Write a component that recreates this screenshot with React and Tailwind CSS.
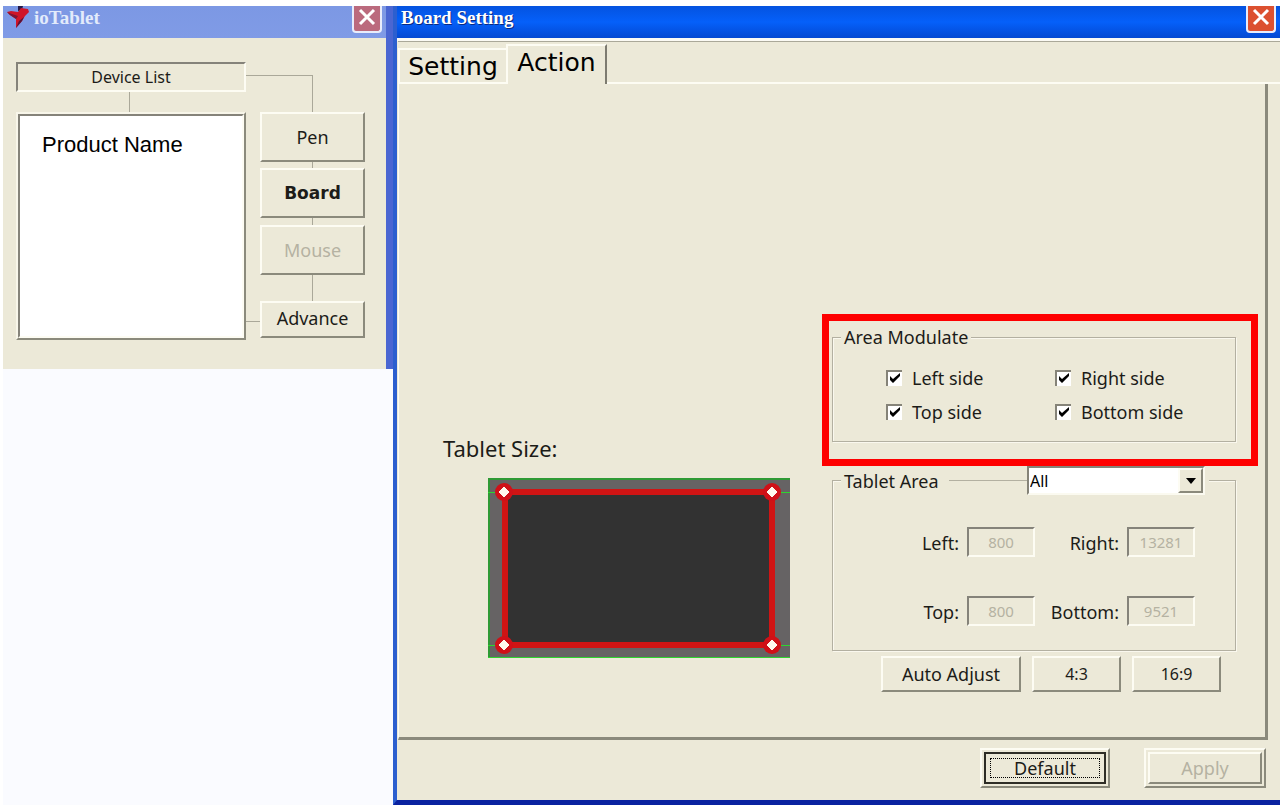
import React, { useState } from 'react';

const raised = 'border-2 border-t-[#fdfcf3] border-l-[#fdfcf3] border-b-[#8b8a7c] border-r-[#8b8a7c] bg-[#ece9d8]';
const sunken = 'border-2 border-t-[#85837a] border-l-[#85837a] border-b-[#fdfcf3] border-r-[#fdfcf3]';
const etched = 'border border-[#b3b0a1] shadow-[inset_1px_1px_#faf8ee,1px_1px_#faf8ee]';

function CloseButton({ className }) {
  return (
    <button
      aria-label="Close"
      className={`flex h-[27px] w-[30px] items-center justify-center rounded-b-[4px] border-2 border-t-0 border-[#e8ecfb] pb-1 ${className}`}
    >
      <svg width="18" height="18" viewBox="0 0 18 18">
        <path d="M2 2 L16 16 M16 2 L2 16" stroke="#fff" strokeWidth="3" fill="none" />
      </svg>
    </button>
  );
}

function Logo() {
  return (
    <svg width="22" height="24" viewBox="0 0 22 24">
      <path d="M11 0 L16 0 L15 4 L11 5 Z" fill="#251a48" />
      <path d="M0 6 L4 5 L11 6 L14 2 L21 3 L22 6 L18 10 L15 15 L9 22 L9 13 L3 9 Z" fill="#d01428" />
      <path d="M0 6 L3 9 L9 13 L11 10 L5 8 Z" fill="#7d1535" />
      <path d="M17 11 L15 15 L9 22 L12 15 Z" fill="#5a1238" />
    </svg>
  );
}

function DeviceButton({ children, className = '', ...rest }) {
  return (
    <button className={`w-full text-lg leading-6 disabled:text-[#b5b2a2] ${raised} ${className}`} {...rest}>
      {children}
    </button>
  );
}

function DeviceWindow() {
  return (
    <section className="w-[390px] shrink-0 self-start border-r-[7px] border-[#4a66d2]">
      <header className="flex h-8 items-start bg-linear-to-b from-[#7c98e4] to-[#809be6] pl-1">
        <Logo />
        <h1 className="flex-1 pl-[5px] font-['Liberation_Serif',serif] text-[19px] leading-6 font-bold text-[#e3ebfb]">
          ioTablet
        </h1>
        <CloseButton className="mr-1 bg-[#bb6a7d]" />
      </header>

      <div className="flex bg-[#ece9d8] pt-6 pb-[29px] pl-[13px]">
        <div className="flex w-[230px] flex-col">
          <div className={`flex h-[30px] items-center justify-center text-base leading-5 ${sunken}`}>Device List</div>
          <div className="ml-[113px] h-5 w-px bg-[#aaa899]" />
          <div className="h-[228px] border-2 border-t-[#f8f6ea] border-l-[#f8f6ea] border-r-[#8b8a7c] border-b-[#8b8a7c]">
            <ul className={`h-full bg-white ${sunken}`}>
              <li className="pt-[15px] pl-[22px] font-['Liberation_Sans',sans-serif] text-[22px] leading-7 text-black">Product Name</li>
            </ul>
          </div>
        </div>

        <div className="flex w-[14px] flex-col justify-between pt-[13px] pb-[18px]">
          <div className="h-px bg-[#aaa899]" />
          <div className="h-px bg-[#aaa899]" />
        </div>

        <div className="flex w-[105px] flex-col items-center pt-[13px]">
          <div className="h-[37px] w-[53px] self-start border-t border-r border-[#aaa899]" />
          <DeviceButton className="h-[50px]">Pen</DeviceButton>
          <div className="h-[6px] w-px bg-[#aaa899]" />
          <DeviceButton className="h-[50px] font-['DejaVu_Sans',sans-serif] text-[17px] font-bold">Board</DeviceButton>
          <div className="h-[7px] w-px bg-[#aaa899]" />
          <DeviceButton className="h-[50px]" disabled>Mouse</DeviceButton>
          <div className="h-[26px] w-px bg-[#aaa899]" />
          <DeviceButton className="h-[37px] pb-[3px]">Advance</DeviceButton>
        </div>
      </div>
    </section>
  );
}

function SideCheckbox({ id, label }) {
  const [checked, setChecked] = useState(true);
  return (
    <div className="flex items-center gap-[10px]">
      <span className="relative block size-4">
        <input
          id={id}
          type="checkbox"
          checked={checked}
          onChange={() => setChecked(!checked)}
          className="block size-4 appearance-none border-t-2 border-l-2 border-[#858378] bg-white"
        />
        {checked && (
          <svg className="pointer-events-none absolute inset-0" width="16" height="16" viewBox="0 0 16 16">
            <path d="M4 6 L7 9 L14 3 L14 6 L7 13 L4 10 Z" fill="#000" />
          </svg>
        )}
      </span>
      <label htmlFor={id} className="text-lg leading-6">{label}</label>
    </div>
  );
}

function AreaField({ id, label, value }) {
  return (
    <>
      <label htmlFor={id} className="pt-1 text-right text-lg leading-6">{label}</label>
      <input
        id={id}
        type="text"
        disabled
        defaultValue={value}
        className={`h-[30px] w-full bg-transparent text-center text-[15px] leading-5 text-[#b5b2a2] ${sunken}`}
      />
    </>
  );
}

const corners = [[16, 14], [284, 14], [16, 167], [284, 167]];

function TabletPreview() {
  return (
    <svg width="302" height="180" viewBox="0 0 302 180">
      <rect width="302" height="180" fill="#666364" />
      <path d="M1 179 V1 H302" stroke="#2f9a35" strokeWidth="2" fill="none" />
      <path d="M0 179.5 H302 M0 14.5 H302 M0 167.5 H302" stroke="#2fd42f" strokeWidth="1" fill="none" />
      <rect x="17" y="14" width="267" height="153" fill="#b01010" />
      <rect x="18" y="16" width="265" height="150" rx="9" fill="#323232" />
      <rect x="17" y="14" width="267" height="153" stroke="#d01414" strokeWidth="6" fill="none" />
      {corners.map(([x, y]) => (
        <g key={`${x}-${y}`}>
          <circle cx={x} cy={y} r="9" fill="#d01018" />
          <path d={`M${x} ${y - 5} l5 5 l-5 5 l-5 -5 Z`} fill="#fff8ee" stroke="#fff8ee" strokeLinejoin="round" />
        </g>
      ))}
    </svg>
  );
}

function AreaModulate() {
  return (
    <div className="border-[7px] border-[#fe0000] pt-1 pr-[15px] pb-[17px] pl-[3px]">
      <fieldset className={`px-2 ${etched}`}>
        <legend className="bg-[#ece9d8] px-[3px] text-lg leading-6">Area Modulate</legend>
        <div className="grid grid-cols-[169px_auto] gap-y-[10px] pt-[17px] pb-[17px] pl-[45px]">
          <SideCheckbox id="side-left" label="Left side" />
          <SideCheckbox id="side-right" label="Right side" />
          <SideCheckbox id="side-top" label="Top side" />
          <SideCheckbox id="side-bottom" label="Bottom side" />
        </div>
      </fieldset>
    </div>
  );
}

function TabletArea() {
  return (
    <fieldset className={`mr-[22px] ml-[10px] ${etched}`}>
      <legend className="ml-2 flex items-center bg-[#ece9d8] pr-1">
        <label htmlFor="tablet-area" className="w-[108px] pl-[3px] text-lg leading-6">Tablet Area</label>
        <span className="h-px w-[78px] bg-[#b3b0a1]" />
        <span className="relative block h-[29px] w-[178px]">
          <select
            id="tablet-area"
            className="block h-full w-full appearance-none border-2 border-t-[#858378] border-r-[#fbfaf0] border-b-[#fbfaf0] border-l-[#858378] bg-white pl-px text-base leading-5 text-black"
          >
            <option>All</option>
            <option>4:3</option>
            <option>16:9</option>
          </select>
          <span className={`pointer-events-none absolute top-[2px] right-[2px] flex h-[25px] w-[25px] items-center justify-center ${raised}`}>
            <svg width="10" height="6" viewBox="0 0 10 6">
              <path d="M0 0 H10 L5 6 Z" fill="#000" />
            </svg>
          </span>
        </span>
      </legend>
      <div className="grid grid-cols-[126px_68px_76px_68px] gap-x-2 gap-y-[39px] pt-8 pb-6">
        <AreaField id="area-left" label="Left:" value="800" />
        <AreaField id="area-right" label="Right:" value="13281" />
        <AreaField id="area-top" label="Top:" value="800" />
        <AreaField id="area-bottom" label="Bottom:" value="9521" />
      </div>
    </fieldset>
  );
}

function BoardWindow() {
  return (
    <section className="flex flex-1 flex-col border-b-[5px] border-l-4 border-b-[#0a22a0] border-l-[#2c5fcf] bg-[#ece9d8]">
      <header className="flex h-8 items-start bg-linear-to-b from-[#0453e0] via-[#0560fa] to-[#0449d2] pl-1">
        <h2 className="flex-1 font-['Liberation_Serif',serif] text-[19px] leading-6 font-bold text-white [text-shadow:1px_1px_#0a2a80]">
          Board Setting
        </h2>
        <CloseButton className="mr-1 bg-[#dc5030]" />
      </header>

      <div className="flex flex-1 flex-col border-t-[3px] border-[#fbfaf4] pl-px">
        <nav className="flex items-end border-t border-[#aaa899] pt-[2px] font-['DejaVu_Sans',sans-serif] text-[25px] text-black">
          <button className="h-9 w-[108px] border-2 border-r-0 border-[#fdfcf3] pt-px leading-8">Setting</button>
          <button className="h-10 w-[101px] border-t-2 border-r-2 border-l-2 border-t-[#fdfcf3] border-r-[#7d7b70] border-l-[#fdfcf3] pb-1 leading-8">Action</button>
          <span className="h-[2px] flex-1 bg-[#fdfcf3]" />
        </nav>

        <main className="mr-3 flex flex-1 border-r-[3px] border-b-[3px] border-l border-l-[#fdfcf3] border-r-[#8b8a7c] border-b-[#8b8a7c]">
          <div className="flex-1 pt-[350px] pl-11">
            <p className="text-[22px] leading-7">Tablet Size:</p>
            <div className="mt-4 ml-[45px]">
              <TabletPreview />
            </div>
          </div>
          <div className="mr-[7px] w-[436px] pt-[230px]">
            <AreaModulate />
            <TabletArea />
            <div className="mt-[5px] ml-[59px] flex gap-[11px]">
              <button className={`h-9 w-[140px] text-lg leading-6 ${raised}`}>Auto Adjust</button>
              <button className={`h-9 w-[89px] text-base leading-6 ${raised}`}>4:3</button>
              <button className={`h-9 w-[89px] text-base leading-6 ${raised}`}>16:9</button>
            </div>
          </div>
        </main>

        <footer className="flex justify-end gap-[34px] pt-2 pr-[14px] pb-3">
          <button className={`h-10 w-[130px] p-[2px] ${raised}`}>
            <span className="block h-full border-2 border-[#2e2d26] p-1">
              <span className="flex h-full items-center justify-center border border-dotted border-black text-lg leading-5">
                Default
              </span>
            </span>
          </button>
          <button disabled className={`h-10 w-[122px] p-[2px] text-lg leading-6 text-[#b5b2a2] ${raised}`}>
            <span className={`flex h-full items-center justify-center ${raised}`}>Apply</span>
          </button>
        </footer>
      </div>
    </section>
  );
}

export default function App() {
  return (
    <div className="flex min-h-screen border-t-[6px] border-r-[3px] border-l-[3px] border-white bg-[#fafbff] font-['Noto_Sans',sans-serif] text-[#1c1c18]">
      <DeviceWindow />
      <BoardWindow />
    </div>
  );
}
